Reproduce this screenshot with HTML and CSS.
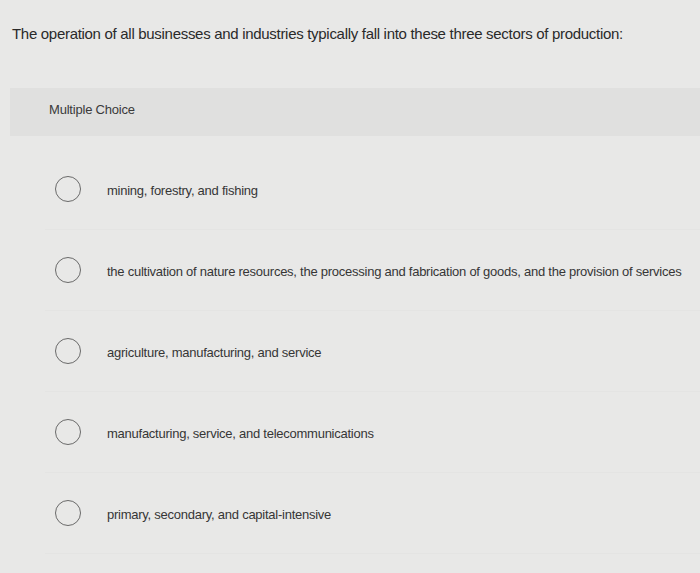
FILE: index.html
```html
<!DOCTYPE html>
<html lang="en">
<head>
  <meta charset="UTF-8">
  <title>Multiple Choice</title>
  <link rel="stylesheet" href="styles.css">
</head>
<body>
  <!-- Question -->
  <p class="question">The operation of all businesses and industries typically fall into these three sectors of production:</p>

  <!-- Answer Block -->
  <div class="choice-block">
    <div class="choice-header">Multiple Choice</div>
    <ul class="options">
      <li class="option"><span class="radio"></span><span class="label">mining, forestry, and fishing</span></li>
      <li class="option"><span class="radio"></span><span class="label">the cultivation of nature resources, the processing and fabrication of goods, and the provision of services</span></li>
      <li class="option"><span class="radio"></span><span class="label">agriculture, manufacturing, and service</span></li>
      <li class="option"><span class="radio"></span><span class="label">manufacturing, service, and telecommunications</span></li>
      <li class="option"><span class="radio"></span><span class="label">primary, secondary, and capital-intensive</span></li>
    </ul>
  </div>
</body>
</html>
```

FILE: styles.css
```css
/* Global */
body {
  margin: 0;
  background: #e8e8e7;
  color: #2e2e2e;
  font-family: 'Liberation Sans', Arial, sans-serif;
  overflow: hidden;
}

/* Question */
.question {
  margin: 0;
  padding: 24px 0 0 12px;
  font-size: 15px;
  line-height: 20px;
  letter-spacing: -0.3px;
  color: #2a2a2a;
}

/* Choice Block */
.choice-block {
  margin: 44px 0 0 10px;
}
.choice-header {
  background: #e0e0df;
  height: 48px;
  line-height: 44px;
  padding-left: 39px;
  font-size: 13px;
  letter-spacing: -0.2px;
  color: #3a3a3a;
}

/* Options */
.options {
  list-style: none;
  margin: 0;
  padding: 13px 0 0 35px;
}
.option {
  display: flex;
  align-items: center;
  height: 81px;
  box-sizing: border-box;
  border-bottom: 1px solid #e4e4e3;
}
.radio {
  width: 24px;
  height: 24px;
  border: 1.2px solid #6a6a6a;
  border-radius: 50%;
  margin-left: 10px;
  flex-shrink: 0;
}
.label {
  margin-left: 26px;
  padding-top: 3px;
  font-size: 13px;
  letter-spacing: -0.25px;
  color: #363636;
  white-space: nowrap;
}
```
